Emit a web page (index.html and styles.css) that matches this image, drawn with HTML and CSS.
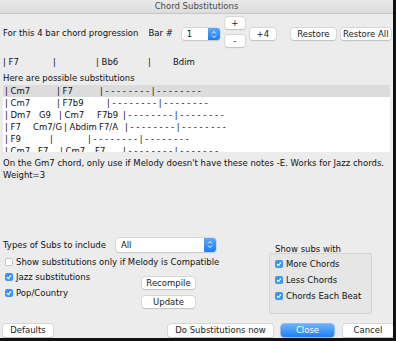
FILE: index.html
```html
<!DOCTYPE html>
<html>
<head>
<meta charset="utf-8">
<link rel="stylesheet" href="styles.css">
</head>
<body>
<div class="window">
  <div class="titlebar">Chord Substitutions</div>

  <div class="row1">
    <span class="lbl l-prog">For this 4 bar chord progression</span>
    <span class="lbl l-bar">Bar #</span>
    <div class="select sel-bar"><span class="sel-text">1</span><span class="stepper"><svg width="6" height="9" viewBox="0 0 6 9"><path d="M1 3.5 L3 1.5 L5 3.5 M1 5.5 L3 7.5 L5 5.5" fill="none" stroke="#fff" stroke-width="1"/></svg></span></div>
    <div class="pm">
      <div class="btn b-pm">+</div>
      <div class="btn b-pm b-minus">-</div>
    </div>
    <div class="btn b-plus4">+4</div>
    <div class="btn b-restore">Restore</div>
    <div class="btn b-restoreall">Restore All</div>
  </div>

  <div class="chords">
    <span class="c1">| F7</span><span class="c2">|</span><span class="c3">| Bb6</span><span class="c4">|</span><span class="c5">Bdim</span>
  </div>

  <div class="here">Here are possible substitutions</div>

  <div class="list">
    <div class="li sel"><span style="width:52px">| Cm7</span><span style="width:43px">| F7</span><span>| - - - - - - - - | - - - - - - - -</span></div>
    <div class="li"><span style="width:52px">| Cm7</span><span style="width:50px">| F7b9</span><span>| - - - - - - - - | - - - - - - - -</span></div>
    <div class="li"><span style="width:34px">| Dm7</span><span style="width:20px">G9</span><span style="width:38px">| Cm7</span><span style="width:26px">F7b9</span><span>| - - - - - - - - | - - - - - - - -</span></div>
    <div class="li"><span style="width:28px">| F7</span><span style="width:31px">Cm7/G</span><span style="width:35px">| Abdim</span><span style="width:26px">F7/A</span><span>| - - - - - - - - | - - - - - - - -</span></div>
    <div class="li"><span style="width:45px">| F9</span><span style="width:38px">|</span><span>| - - - - - - - - | - - - - - - - -</span></div>
    <div class="li"><span style="width:33px">| Cm7</span><span style="width:22px">F7</span><span style="width:35px">| Cm7</span><span style="width:28px">F7</span><span>| - - - - - - - - | - - - - - - -</span></div>
  </div>

  <div class="desc">On the Gm7 chord, only use if Melody doesn't have these notes -E. Works for Jazz chords.<br>Weight=3</div>

  <div class="lower">
    <div class="left">
      <div class="types">
        <span class="lbl">Types of Subs to include</span>
        <div class="select sel-all"><span class="sel-text">All</span><span class="stepper"><svg width="6" height="9" viewBox="0 0 6 9"><path d="M1 3.5 L3 1.5 L5 3.5 M1 5.5 L3 7.5 L5 5.5" fill="none" stroke="#fff" stroke-width="1"/></svg></span></div>
      </div>
      <div class="cbrow cb-first"><span class="cb"></span>Show substitutions only if Melody is Compatible</div>
      <div class="sub">
        <div class="cbcol">
          <div class="cbrow"><span class="cb on"><svg width="8" height="8" viewBox="0 0 8 8"><path d="M2 4.2 L3.4 5.6 L6 2.4" fill="none" stroke="#fff" stroke-width="1.2"/></svg></span>Jazz substitutions</div>
          <div class="cbrow cb-gap"><span class="cb on"><svg width="8" height="8" viewBox="0 0 8 8"><path d="M2 4.2 L3.4 5.6 L6 2.4" fill="none" stroke="#fff" stroke-width="1.2"/></svg></span>Pop/Country</div>
        </div>
        <div class="btncol">
          <div class="btn b-recompile">Recompile</div>
          <div class="btn b-update">Update</div>
        </div>
      </div>
    </div>
    <div class="right">
      <div class="showlbl">Show subs with</div>
      <div class="group">
        <div class="cbrow"><span class="cb on"><svg width="8" height="8" viewBox="0 0 8 8"><path d="M2 4.2 L3.4 5.6 L6 2.4" fill="none" stroke="#fff" stroke-width="1.2"/></svg></span>More Chords</div>
        <div class="cbrow cb-gap"><span class="cb on"><svg width="8" height="8" viewBox="0 0 8 8"><path d="M2 4.2 L3.4 5.6 L6 2.4" fill="none" stroke="#fff" stroke-width="1.2"/></svg></span>Less Chords</div>
        <div class="cbrow cb-gap"><span class="cb on"><svg width="8" height="8" viewBox="0 0 8 8"><path d="M2 4.2 L3.4 5.6 L6 2.4" fill="none" stroke="#fff" stroke-width="1.2"/></svg></span>Chords Each Beat</div>
      </div>
    </div>
  </div>

  <div class="bottom">
    <div class="btn b-defaults">Defaults</div>
    <div class="btn b-dosubs">Do Substitutions now</div>
    <div class="btn b-close">Close</div>
    <div class="btn b-cancel">Cancel</div>
  </div>
</div>
</body>
</html>
```

FILE: styles.css
```css
html, body {
  margin: 0;
  padding: 0;
  background: #111;
}
body {
  width: 396px;
  height: 341px;
  overflow: hidden;
  font-family: "DejaVu Sans", "Liberation Sans", sans-serif;
  font-size: 8.5px;
  color: #111;
}
.window {
  width: 393px;
  height: 338px;
  background: #ececec;
  display: flex;
  flex-direction: column;
  overflow: hidden;
}
.titlebar {
  height: 13px;
  line-height: 13px;
  text-align: center;
  color: #4a4a4a;
  background: linear-gradient(#e9e9e9, #dcdcdc);
  border-bottom: 1px solid #c6c6c6;
  flex: none;
}
.row1 {
  display: flex;
  align-items: flex-start;
  height: 31px;
  margin-top: 3px;
  padding-left: 3px;
  flex: none;
}
.lbl {
  line-height: 12px;
  white-space: nowrap;
}
.row1 .lbl { margin-top: 10px; }
.l-bar { margin-left: 10px; }
.select {
  display: flex;
  background: #fff;
  border-radius: 3px;
  box-shadow: 0 0 0 0.5px #c4c4c4, 0 0.5px 1px rgba(0,0,0,0.15);
  overflow: hidden;
}
.sel-text {
  flex: 1;
  padding-left: 5px;
  line-height: 12px;
}
.stepper {
  width: 12px;
  background: linear-gradient(#5aa9fb, #1c7ef5);
  display: flex;
  align-items: center;
  justify-content: center;
}
.sel-bar {
  width: 38px;
  height: 12px;
  margin-top: 11px;
  margin-left: 9px;
}
.pm {
  display: flex;
  flex-direction: column;
  margin-left: 5px;
}
.btn {
  background: #fff;
  border-radius: 3px;
  box-shadow: 0 0 0 0.5px #c8c8c8, 0 0.5px 1px rgba(0,0,0,0.2);
  text-align: center;
  white-space: nowrap;
  line-height: 12px;
  height: 12px;
  color: #222;
}
.b-pm { width: 20px; }
.b-minus { margin-top: 6px; }
.b-plus4 { width: 26px; margin-left: 5px; margin-top: 11px; }
.b-restore { width: 45px; margin-left: 15px; margin-top: 11px; }
.b-restoreall { width: 50px; margin-left: 5px; margin-top: 11px; }

.chords {
  display: flex;
  height: 12px;
  line-height: 12px;
  margin-top: 8px;
  padding-left: 3px;
  flex: none;
  white-space: nowrap;
}
.c1 { width: 50px; }
.c2 { width: 43px; }
.c3 { width: 52px; }
.c4 { width: 25px; }

.here {
  line-height: 12px;
  margin-top: 4px;
  padding-left: 3px;
  flex: none;
}
.list {
  margin: 1px 3px 0 3px;
  height: 67px;
  background: #fff;
  overflow: hidden;
  flex: none;
  box-shadow: inset 0 1px 0 #d0d0d0;
}
.li {
  height: 12px;
  line-height: 12px;
  display: flex;
  white-space: nowrap;
  padding-left: 2px;
}
.li span { flex: none; }
.li.sel { background: #dcdcdc; }

.desc {
  margin-top: 5px;
  padding-left: 3px;
  line-height: 12px;
  flex: none;
  white-space: nowrap;
}
.lower {
  display: flex;
  margin-top: 56px;
  height: 73px;
  flex: none;
}
.left {
  width: 269px;
  padding-left: 3px;
  box-sizing: border-box;
}
.types {
  display: flex;
  align-items: center;
  height: 15px;
}
.sel-all {
  width: 100px;
  height: 14px;
  margin-left: 10px;
}
.sel-all .sel-text { line-height: 14px; }
.cbrow {
  display: flex;
  align-items: center;
  line-height: 12px;
  height: 12px;
  white-space: nowrap;
}
.cb {
  width: 8px;
  height: 8px;
  border-radius: 2px;
  background: #fff;
  box-shadow: inset 0 0 0 0.7px #b4b4b4;
  margin-left: 2px;
  margin-right: 3px;
  display: flex;
  flex: none;
}
.cb.on {
  background: #3a95fa;
  box-shadow: none;
}
.cb-first { margin-top: 4px; }
.sub { display: flex; }
.cbcol { width: 139px; padding-top: 3px; }
.cb-gap { margin-top: 4px; }
.btncol { display: flex; flex-direction: column; }
.b-recompile { width: 53px; margin-top: 9px; }
.b-update { width: 53px; margin-top: 7px; }

.right { width: 103px; }
.showlbl {
  padding-top: 8px;
  line-height: 8px;
  padding-left: 6px;
  white-space: nowrap;
}
.group {
  height: 55px;
  background: #e6e6e6;
  border: 1px solid #d4d4d4;
  border-radius: 2px;
  padding-top: 4px;
  padding-left: 3px;
  box-sizing: content-box;
}
.bottom {
  display: flex;
  margin-top: 14px;
  flex: none;
}
.btn.b-defaults, .btn.b-dosubs, .btn.b-close, .btn.b-cancel { height: 13px; line-height: 13px; }
.b-defaults { width: 50px; margin-left: 3px; }
.b-dosubs { width: 105px; margin-left: 115px; }
.b-close {
  width: 53px;
  margin-left: 8px;
  color: #fff;
  background: linear-gradient(#6db3fb, #1b7ff6);
  box-shadow: 0 0 0 0.5px #3a8ef0;
}
.b-cancel { width: 50px; margin-left: 9px; }
```
